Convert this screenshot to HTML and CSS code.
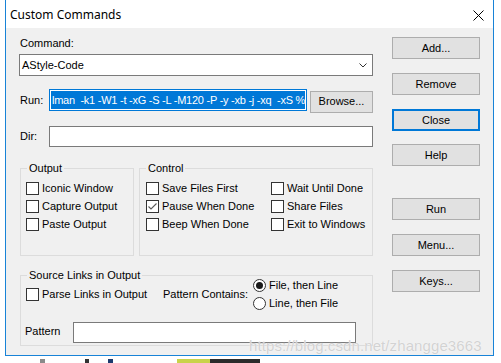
FILE: index.html
```html
<!DOCTYPE html>
<html>
<head>
<meta charset="utf-8">
<link rel="stylesheet" href="styles.css">
</head>
<body>
<div class="screen">
  <div class="window">
    <div class="titlebar">
      <span class="title">Custom Commands</span>
      <svg class="close-x" width="11" height="11" viewBox="0 0 11 11"><path d="M0.5 0.5 L10.5 10.5 M10.5 0.5 L0.5 10.5" stroke="#000" stroke-width="1" fill="none"/></svg>
    </div>
    <div class="client">
      <div class="form">
        <div class="label">Command:</div>
        <div class="combo">
          <span class="combo-text">AStyle-Code</span>
          <svg class="chevron" width="8" height="5" viewBox="0 0 8 5"><path d="M0.5 0.5 L4 4 L7.5 0.5" stroke="#333" stroke-width="1" fill="none"/></svg>
        </div>
        <div class="row run-row">
          <span class="row-label">Run:</span>
          <div class="textbox run-box"><span class="sel">lman  -k1 -W1 -t -xG -S -L -M120 -P -y -xb -j -xq  -xS %f</span></div>
          <div class="btn browse">Browse...</div>
        </div>
        <div class="row dir-row">
          <span class="row-label">Dir:</span>
          <div class="textbox dir-box"></div>
        </div>
        <div class="groups">
          <fieldset class="group output">
            <legend>Output</legend>
            <div class="checks">
              <label class="check"><span class="box"></span>Iconic Window</label>
              <label class="check"><span class="box"></span>Capture Output</label>
              <label class="check"><span class="box"></span>Paste Output</label>
            </div>
          </fieldset>
          <fieldset class="group control">
            <legend>Control</legend>
            <div class="checks two-col">
              <label class="check"><span class="box"></span>Save Files First</label>
              <label class="check"><span class="box"></span>Wait Until Done</label>
              <label class="check"><span class="box checked"><svg width="11" height="11" viewBox="0 0 11 11"><path d="M1.5 5.5 L4 8 L9.5 2.5" stroke="#5a5a5a" stroke-width="1.1" fill="none"/></svg></span>Pause When Done</label>
              <label class="check"><span class="box"></span>Share Files</label>
              <label class="check"><span class="box"></span>Beep When Done</label>
              <label class="check"><span class="box"></span>Exit to Windows</label>
            </div>
          </fieldset>
        </div>
        <fieldset class="group source">
          <legend>Source Links in Output</legend>
          <div class="source-top">
            <label class="check parse"><span class="box"></span>Parse Links in Output</label>
            <span class="contains">Pattern Contains:</span>
            <div class="radios">
              <label class="radio"><span class="circle on"></span>File, then Line</label>
              <label class="radio"><span class="circle"></span>Line, then File</label>
            </div>
          </div>
          <div class="pattern-row">
            <span class="pattern-label">Pattern</span>
            <div class="textbox pattern-box"></div>
          </div>
        </fieldset>
      </div>
      <div class="buttons">
        <div class="btn">Add...</div>
        <div class="btn">Remove</div>
        <div class="btn default">Close</div>
        <div class="btn help">Help</div>
        <div class="btn run">Run</div>
        <div class="btn">Menu...</div>
        <div class="btn">Keys...</div>
      </div>
    </div>
  </div>
  <div class="desk">
    <span class="d1"></span><span class="d2"></span><span class="d3"></span><span class="d4"></span><span class="d5"></span>
  </div>
  <div class="watermark">https://blog.csdn.net/zhangge3663</div>
</div>
</body>
</html>
```
FILE: styles.css
```css
html, body {
  margin: 0;
  padding: 0;
  background: #ffffff;
}
.screen {
  position: relative;
  width: 501px;
  height: 363px;
  overflow: hidden;
  font-family: "Liberation Sans", Arial, sans-serif;
  font-size: 11px;
  line-height: 13px;
  color: #000;
}
.window {
  margin-left: 5px;
  width: 489px;
  height: 356px;
  box-sizing: border-box;
  border-left: 1px solid #1883d7;
  border-right: 1px solid #1883d7;
  border-bottom: 1px solid #1883d7;
  display: flex;
  flex-direction: column;
}
.titlebar {
  height: 28px;
  background: #fff;
  display: flex;
  align-items: center;
  justify-content: space-between;
  padding: 0 9px 0 4px;
}
.title {
  font-family: "Noto Sans", "Open Sans", sans-serif;
  font-size: 12px;
  line-height: 16px;
  margin-top: 1px;
}
.close-x {
  display: block;
  margin-top: 2px;
}
.client {
  flex: 1;
  background: #f0f0f0;
  display: flex;
}
.form {
  padding-left: 13px;
  width: 354px;
}
.label {
  margin-top: 9px;
  padding-left: 1px;
}
.combo {
  margin-top: 4px;
  height: 22px;
  box-sizing: border-box;
  border: 1px solid #7a7a7a;
  background: #fff;
  display: flex;
  align-items: center;
  justify-content: space-between;
  padding: 0 5px 0 2px;
}
.chevron { display: block; }
.row {
  display: flex;
  align-items: center;
}
.row-label {
  width: 30px;
  padding-left: 1px;
  box-sizing: border-box;
}
.run-row {
  margin-top: 13px;
  height: 22px;
}
.textbox {
  box-sizing: border-box;
  border: 1px solid #7a7a7a;
  background: #fff;
}
.run-box {
  width: 258px;
  height: 22px;
  border-color: #0078d7;
  padding: 1px;
  overflow: hidden;
  display: flex;
}
.sel {
  flex: 1;
  background: #0078d7;
  color: #fff;
  white-space: pre;
  overflow: hidden;
  line-height: 18px;
  padding-left: 1px;
  letter-spacing: -0.25px;
}
.btn {
  box-sizing: border-box;
  height: 22px;
  border: 1px solid #adadad;
  background: #e1e1e1;
  display: flex;
  align-items: center;
  justify-content: center;
}
.browse {
  width: 63px;
  margin-left: 3px;
  margin-top: 3px;
}
.dir-row {
  margin-top: 15px;
}
.dir-box {
  width: 324px;
  height: 21px;
}
.groups {
  margin-top: 15px;
  display: flex;
  gap: 5px;
  margin-left: 1px;
}
.group {
  margin: 0;
  padding: 0;
  min-width: 0;
  box-sizing: border-box;
  border: 1px solid #dcdcdc;
}
.group legend {
  padding: 0 2px;
  margin-left: 6px;
  line-height: 13px;
}
.output {
  width: 114px;
  height: 94px;
}
.control {
  width: 234px;
  height: 94px;
}
.checks {
  padding-top: 4px;
  padding-left: 5px;
}
.control .checks {
  padding-left: 6px;
}
.two-col {
  display: grid;
  grid-template-columns: 125px auto;
}
.check {
  display: flex;
  align-items: center;
  height: 18px;
  white-space: nowrap;
}
.box {
  width: 13px;
  height: 13px;
  box-sizing: border-box;
  border: 1px solid #333;
  background: #fff;
  margin-right: 3px;
  flex: none;
  display: flex;
  align-items: center;
  justify-content: center;
}
.box svg { display: block; }
.source {
  margin-top: 13px;
  margin-left: 1px;
  width: 353px;
  padding-bottom: 2px;
}
.source-top {
  margin-top: -6px;
  display: flex;
  align-items: center;
  padding-left: 5px;
}
.parse {
  width: 137px;
}
.contains {
  width: 90px;
}
.radio {
  display: flex;
  align-items: center;
  height: 18px;
  white-space: nowrap;
}
.circle {
  width: 13px;
  height: 13px;
  box-sizing: border-box;
  border: 1px solid #333;
  border-radius: 50%;
  background: #fff;
  margin-right: 3px;
  display: flex;
  align-items: center;
  justify-content: center;
}
.circle.on::after {
  content: "";
  width: 7px;
  height: 7px;
  border-radius: 50%;
  background: #1a1a1a;
}
.pattern-row {
  margin-top: 10px;
  display: flex;
  align-items: center;
  padding-left: 4px;
}
.pattern-label {
  width: 48px;
  margin-top: -3px;
}
.pattern-box {
  width: 283px;
  height: 21px;
}
.buttons {
  margin-left: 19px;
  width: 88px;
  display: flex;
  flex-direction: column;
  gap: 14px;
  padding-top: 9px;
}
.default {
  border: 2px solid #0078d7;
}
.help { margin-top: -1px; }
.run { margin-top: 18px; }
.desk {
  display: flex;
  height: 7px;
  align-items: flex-end;
}
.desk span { display: block; height: 4px; }
.d1 { width: 5px; margin-left: 40px; background: #8a8a8a; }
.d2 { width: 4px; margin-left: 40px; background: #333; }
.d3 { width: 5px; margin-left: 19px; background: #1c3a6e; }
.d4 { width: 33px; margin-left: 64px; background: #c9d34a; }
.d5 { width: 50px; background: #2b2b2b; }
.watermark {
  position: absolute;
  left: 249px;
  top: 337px;
  font-family: "Liberation Sans", Arial, sans-serif;
  font-size: 15px;
  line-height: 17px;
  color: rgba(205, 205, 205, 0.9);
  text-shadow: 0 0 1px #fff;
  letter-spacing: 0.1px;
}
```
